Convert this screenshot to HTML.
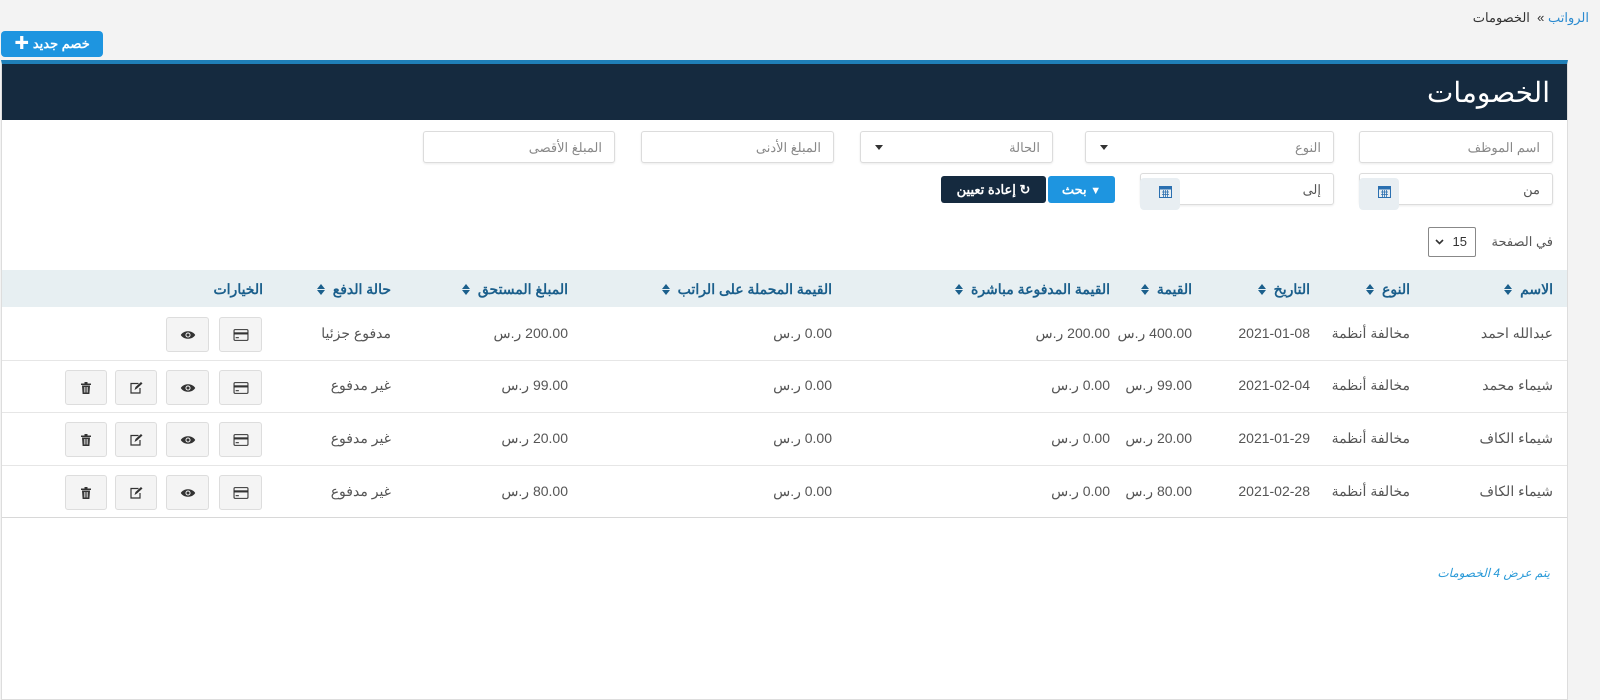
<!DOCTYPE html>
<html><head><meta charset="utf-8"><style>
*{box-sizing:border-box;margin:0;padding:0}
body{width:1600px;height:697px;background:#f3f3f3;font-family:"Liberation Sans","Noto Sans CJK SC",sans-serif;position:relative;overflow:hidden;color:#555}
.a{position:absolute}
.t{position:absolute;white-space:nowrap;direction:rtl}
.panel{left:1px;top:60px;width:1567px;height:640px;background:#fff;border:1px solid #ddd;border-top:4px solid #1f7fb8}
.hdr{left:2px;top:64px;width:1565px;height:56px;background:#152a3f}
.inp{position:absolute;background:#fff;border:1px solid #dcdcdc;border-radius:3px;box-shadow:0 1px 2px rgba(0,0,0,.08);height:32px;font-size:13px;color:#888;direction:rtl;padding:8px 12px}
.caret{position:absolute;left:14px;top:13px;border-left:4px solid transparent;border-right:4px solid transparent;border-top:5px solid #333}
.cal{position:absolute;background:#e8eef2;border-radius:4px;width:40px;height:32px}
.th{position:absolute;top:281px;font-size:14px;font-weight:bold;color:#1b5f8c;direction:rtl;white-space:nowrap}
.sort{display:inline-block;width:8px;height:11px;position:relative;margin-right:4px;vertical-align:-1px}
.sort:before{content:"";position:absolute;left:0;top:0;border-left:4px solid transparent;border-right:4px solid transparent;border-bottom:5px solid #1b5f8c}
.sort:after{content:"";position:absolute;left:0;top:6px;border-left:4px solid transparent;border-right:4px solid transparent;border-top:5px solid #1b5f8c}
.td{position:absolute;font-size:14px;color:#555;direction:rtl;white-space:nowrap}
.row{position:absolute;left:2px;width:1565px;border-bottom:1px solid #e6e6e6}
.btn{position:absolute;width:43px;height:35px;background:#f4f4f4;border:1px solid #ddd;border-radius:3px}
.btn svg{position:absolute;left:50%;top:50%;transform:translate(-50%,-50%)}
</style></head><body>
<div class="t" style="right:11px;top:10px;font-size:13px;color:#333"><span style="color:#2a8ad0">الرواتب</span> » &nbsp;الخصومات</div>
<div class="a" style="left:1px;top:31px;width:102px;height:26px;background:#1e95e0;border-radius:4px;color:#fff;font-size:13px;font-weight:bold;text-align:center;line-height:26px;direction:rtl">خصم جديد <span style="font-size:15px">✚</span></div>

<div class="a panel"></div>
<div class="a hdr"></div>
<div class="t" style="right:50px;top:76px;font-size:28px;color:#fff">الخصومات</div>

<div class="inp" style="left:1359px;top:131px;width:194px">اسم الموظف</div>
<div class="inp" style="left:1085px;top:131px;width:249px">النوع<span class="caret"></span></div>
<div class="inp" style="left:860px;top:131px;width:193px">الحالة<span class="caret"></span></div>
<div class="inp" style="left:641px;top:131px;width:193px">المبلغ الأدنى</div>
<div class="inp" style="left:423px;top:131px;width:192px">المبلغ الأقصى</div>

<div class="inp" style="left:1359px;top:173px;width:194px;color:#555">من</div>
<div class="cal" style="left:1359px;top:178px"></div>
<div class="inp" style="left:1140px;top:173px;width:194px;color:#555">إلى</div>
<div class="cal" style="left:1140px;top:178px"></div>
<svg class="a" style="left:1378px;top:185px" width="13" height="13" viewBox="0 0 13 13"><rect x="0.5" y="1.5" width="12" height="11" fill="none" stroke="#2a6fb0"/><rect x="0.5" y="1.5" width="12" height="3" fill="#2a6fb0"/><path d="M3 7h7M3 9.5h7M4.5 5v7M6.5 5v7M8.5 5v7" stroke="#2a6fb0" stroke-width="0.8"/></svg>
<svg class="a" style="left:1159px;top:185px" width="13" height="13" viewBox="0 0 13 13"><rect x="0.5" y="1.5" width="12" height="11" fill="none" stroke="#2a6fb0"/><rect x="0.5" y="1.5" width="12" height="3" fill="#2a6fb0"/><path d="M3 7h7M3 9.5h7M4.5 5v7M6.5 5v7M8.5 5v7" stroke="#2a6fb0" stroke-width="0.8"/></svg>

<div class="a" style="left:1048px;top:176px;width:67px;height:27px;background:#1e95e0;border-radius:3px;color:#fff;font-size:13px;font-weight:bold;line-height:27px;text-align:center;direction:rtl"><span style="font-size:11px">▼</span> بحث</div>
<div class="a" style="left:941px;top:176px;width:105px;height:27px;background:#152a3f;border-radius:3px;color:#fff;font-size:13px;font-weight:bold;line-height:27px;text-align:center;direction:rtl">↻ إعادة تعيين</div>

<div class="t" style="right:47px;top:234px;font-size:13px;color:#555">في الصفحة</div>
<div class="a" style="left:1428px;top:227px;width:48px;height:30px;border:1px solid #888;border-radius:2px;background:#fff;font-size:13px;color:#333"><span class="a" style="right:8px;top:6px">15</span><svg class="a" style="left:6px;top:11px" width="9" height="6"><path d="M1 1l3.5 3.5L8 1" fill="none" stroke="#333" stroke-width="1.6"/></svg></div>

<div class="a" style="left:2px;top:270px;width:1565px;height:37px;background:#e7eff2"></div>
<div class="th" style="right:47px">الاسم <span class="sort"></span></div>
<div class="th" style="right:190px">النوع <span class="sort"></span></div>
<div class="th" style="right:290px">التاريخ <span class="sort"></span></div>
<div class="th" style="right:408px">القيمة <span class="sort"></span></div>
<div class="th" style="right:490px">القيمة المدفوعة مباشرة <span class="sort"></span></div>
<div class="th" style="right:768px">القيمة المحملة على الراتب <span class="sort"></span></div>
<div class="th" style="right:1032px">المبلغ المستحق <span class="sort"></span></div>
<div class="th" style="right:1209px">حالة الدفع <span class="sort"></span></div>
<div class="th" style="right:1337px">الخيارات</div>

<div class="row" style="top:307px;height:54px"></div>
<div class="row" style="top:361px;height:52px"></div>
<div class="row" style="top:413px;height:53px"></div>
<div class="row" style="top:466px;height:52px;border-bottom-color:#d8d8d8"></div>

<div class="td" style="right:47px;top:325px">عبدالله احمد</div>
<div class="td" style="right:190px;top:325px">مخالفة أنظمة</div>
<div class="td" style="right:290px;top:325px">2021-01-08</div>
<div class="td" style="right:408px;top:325px">400.00 ر.س</div>
<div class="td" style="right:490px;top:325px">200.00 ر.س</div>
<div class="td" style="right:768px;top:325px">0.00 ر.س</div>
<div class="td" style="right:1032px;top:325px">200.00 ر.س</div>
<div class="td" style="right:1209px;top:325px">مدفوع جزئيا</div>

<div class="td" style="right:47px;top:377px">شيماء محمد</div>
<div class="td" style="right:190px;top:377px">مخالفة أنظمة</div>
<div class="td" style="right:290px;top:377px">2021-02-04</div>
<div class="td" style="right:408px;top:377px">99.00 ر.س</div>
<div class="td" style="right:490px;top:377px">0.00 ر.س</div>
<div class="td" style="right:768px;top:377px">0.00 ر.س</div>
<div class="td" style="right:1032px;top:377px">99.00 ر.س</div>
<div class="td" style="right:1209px;top:377px">غير مدفوع</div>

<div class="td" style="right:47px;top:430px">شيماء الكاف</div>
<div class="td" style="right:190px;top:430px">مخالفة أنظمة</div>
<div class="td" style="right:290px;top:430px">2021-01-29</div>
<div class="td" style="right:408px;top:430px">20.00 ر.س</div>
<div class="td" style="right:490px;top:430px">0.00 ر.س</div>
<div class="td" style="right:768px;top:430px">0.00 ر.س</div>
<div class="td" style="right:1032px;top:430px">20.00 ر.س</div>
<div class="td" style="right:1209px;top:430px">غير مدفوع</div>

<div class="td" style="right:47px;top:483px">شيماء الكاف</div>
<div class="td" style="right:190px;top:483px">مخالفة أنظمة</div>
<div class="td" style="right:290px;top:483px">2021-02-28</div>
<div class="td" style="right:408px;top:483px">80.00 ر.س</div>
<div class="td" style="right:490px;top:483px">0.00 ر.س</div>
<div class="td" style="right:768px;top:483px">0.00 ر.س</div>
<div class="td" style="right:1032px;top:483px">80.00 ر.س</div>
<div class="td" style="right:1209px;top:483px">غير مدفوع</div>

<svg width="0" height="0" style="position:absolute"><defs>
<symbol id="card" viewBox="0 0 14 11"><rect x="0.5" y="0.5" width="13" height="10" rx="1" fill="none" stroke="#333"/><rect x="0.5" y="3" width="13" height="2" fill="#333"/><rect x="2" y="7.5" width="3" height="1" fill="#333"/></symbol>
<symbol id="eye" viewBox="0 0 14 9"><path d="M0.5 4.5C3 0 11 0 13.5 4.5C11 9 3 9 0.5 4.5Z" fill="#333"/><circle cx="7" cy="4.5" r="2.3" fill="#f4f4f4"/><circle cx="7" cy="4.5" r="1.4" fill="#333"/></symbol>
<symbol id="edit" viewBox="0 0 13 12"><path d="M9 1.5H1.5v9.5h9V6" fill="none" stroke="#333" stroke-width="1.2"/><path d="M5 8l1-3 5.5-5 1.5 1.5-5.5 5z" fill="#333"/></symbol>
<symbol id="trash" viewBox="0 0 10 12"><rect x="0" y="1.5" width="10" height="1.5" fill="#333"/><rect x="3.5" y="0" width="3" height="2" fill="#333"/><path d="M1 3.5h8l-0.6 8.5h-6.8z" fill="#333"/><path d="M3.3 5v5.5M5 5v5.5M6.7 5v5.5" stroke="#f4f4f4" stroke-width="0.7"/></symbol>
</defs></svg>

<div class="btn" style="left:219px;top:317px"><svg width="15" height="12"><use href="#card"/></svg></div>
<div class="btn" style="left:166px;top:317px"><svg width="16" height="10"><use href="#eye"/></svg></div>

<div class="btn" style="left:219px;top:370px"><svg width="15" height="12"><use href="#card"/></svg></div>
<div class="btn" style="left:166px;top:370px"><svg width="16" height="10"><use href="#eye"/></svg></div>
<div class="btn" style="left:115px;top:370px;width:42px"><svg width="13" height="12"><use href="#edit"/></svg></div>
<div class="btn" style="left:65px;top:370px;width:42px"><svg width="10" height="12"><use href="#trash"/></svg></div>

<div class="btn" style="left:219px;top:422px"><svg width="15" height="12"><use href="#card"/></svg></div>
<div class="btn" style="left:166px;top:422px"><svg width="16" height="10"><use href="#eye"/></svg></div>
<div class="btn" style="left:115px;top:422px;width:42px"><svg width="13" height="12"><use href="#edit"/></svg></div>
<div class="btn" style="left:65px;top:422px;width:42px"><svg width="10" height="12"><use href="#trash"/></svg></div>

<div class="btn" style="left:219px;top:475px"><svg width="15" height="12"><use href="#card"/></svg></div>
<div class="btn" style="left:166px;top:475px"><svg width="16" height="10"><use href="#eye"/></svg></div>
<div class="btn" style="left:115px;top:475px;width:42px"><svg width="13" height="12"><use href="#edit"/></svg></div>
<div class="btn" style="left:65px;top:475px;width:42px"><svg width="10" height="12"><use href="#trash"/></svg></div>

<div class="t" style="right:50px;top:566px;font-size:12px;font-style:italic;color:#2a9ad8">يتم عرض 4 الخصومات</div>
</body></html>
